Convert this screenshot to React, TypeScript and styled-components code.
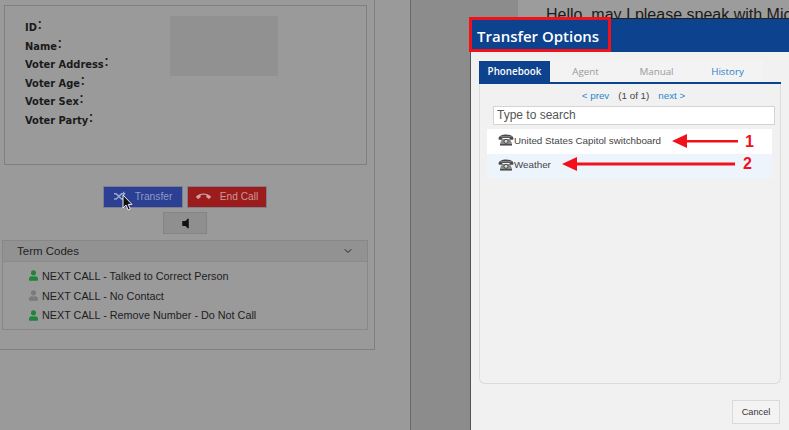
import React from "react";
import styled, { createGlobalStyle } from "styled-components";
import { FaUser, FaVolumeOff } from "react-icons/fa";
import { ImShuffle } from "react-icons/im";
import { MdCallEnd } from "react-icons/md";
import { ChevronDown } from "lucide-react";

const GlobalStyle = createGlobalStyle`
    html, body {
        margin: 0;
        padding: 0;
        width: 789px;
        height: 430px;
        overflow: hidden;
        background: #9a9a9a;
        font-family: "Liberation Sans", Arial, sans-serif;
    }
`;

const Page = styled.div`
    position: relative;
    width: 789px;
    height: 430px;
    overflow: hidden;
    display: flex;
    align-items: flex-start;
`;

const LeftPanel = styled.section`
    width: 375px;
    height: 350px;
    box-sizing: border-box;
    flex-shrink: 0;
    padding: 5px 6px 0 2px;
    border-right: 1px solid #7f7f7f;
    border-bottom: 1px solid #7f7f7f;
    display: flex;
    flex-direction: column;
`;

const InfoBox = styled.div`
    height: 160px;
    margin: 0 0 0 2px;
    width: 363px;
    box-sizing: border-box;
    border: 1px solid #7f7f7f;
    padding: 10px 88px 0 20px;
    display: flex;
    justify-content: space-between;
    align-items: flex-start;
`;

const Fields = styled.div`
    display: flex;
    flex-direction: column;
    padding-top: 3px;
    font-family: "DejaVu Sans", Verdana, sans-serif;
    font-size: 9.9px;
    font-weight: 700;
    color: #1a1a1a;
    line-height: 18.6px;
`;

const Colon = styled.span`
    font-family: "Noto Sans CJK SC", sans-serif;
    font-size: 11px;
    line-height: 0;
    position: relative;
    top: -2px;
`;

const Photo = styled.div`
    width: 108px;
    height: 60px;
    background: #919191;
`;

const Actions = styled.div`
    margin-top: 21px;
    display: flex;
    justify-content: center;
    gap: 4px;
`;

const CallButton = styled.div<{ $bg: string; $fg: string }>`
    width: 80px;
    height: 22px;
    box-sizing: border-box;
    background: ${props => props.$bg};
    border: 1px solid #7b7f90;
    color: ${props => props.$fg};
    font-size: 10.2px;
    display: flex;
    align-items: center;
    justify-content: center;
    gap: 9px;
    padding-bottom: 2px;
`;

const SpeakerRow = styled.div`
    margin-top: 4px;
    display: flex;
    justify-content: center;
`;

const SpeakerButton = styled.div`
    width: 44px;
    height: 22px;
    box-sizing: border-box;
    background: #8f8f8f;
    border: 1px solid #848484;
    color: #111;
    display: flex;
    align-items: center;
    justify-content: center;
`;

const TermCodes = styled.div`
    margin-top: 6px;
    width: 366px;
    height: 90px;
    box-sizing: border-box;
    border: 1px solid #878787;
`;

const TermHeader = styled.div`
    height: 21px;
    box-sizing: border-box;
    background: #929292;
    border-bottom: 1px solid #8a8a8a;
    padding: 0 13px 0 14px;
    display: flex;
    align-items: center;
    justify-content: space-between;
    font-size: 11.5px;
    color: #222;
`;

const TermList = styled.div`
    padding: 4px 0 0 26px;
    display: flex;
    flex-direction: column;
`;

const TermRow = styled.div`
    height: 19.7px;
    display: flex;
    align-items: center;
    gap: 4px;
    font-size: 10.8px;
    color: #1d1d1d;
`;

const TermIcon = styled(FaUser)<{ $on: boolean }>`
    width: 9px;
    height: 11px;
    color: ${props => (props.$on ? "#1f8338" : "#7a7a7a")};
`;

const Gutter = styled.div`
    width: 35px;
    height: 430px;
    flex-shrink: 0;
    border-right: 1px solid #6a6a6a;
`;

const Script = styled.div`
    flex: 1;
    height: 430px;
    background: #8c8c8c;
    display: flex;
`;

const ScriptMargin = styled.div`
    width: 107px;
    flex-shrink: 0;
`;

const ScriptBody = styled.div`
    flex: 1;
    background: #9c9c9c;
    overflow: hidden;
    white-space: nowrap;
    font-size: 16px;
    color: #1a1a1a;
    padding: 6px 0 0 28px;
`;

const Modal = styled.div`
    position: absolute;
    left: 470px;
    top: 18px;
    width: 319px;
    height: 412px;
    box-sizing: border-box;
    background: #f1f1f1;
    border-left: 1px solid #555;
    border-top: 1px solid #222;
    display: flex;
    flex-direction: column;
`;

const ModalHeader = styled.div`
    height: 33px;
    flex-shrink: 0;
    background: #0d428e;
    color: #fff;
    font-family: "Open Sans", sans-serif;
    font-size: 15px;
    font-weight: 600;
    line-height: 35px;
    padding-left: 6px;
`;

const Tabs = styled.div`
    margin: 9px 0 0 8px;
    width: 302px;
    height: 23px;
    box-sizing: border-box;
    border-bottom: 2px solid #0d428e;
    display: flex;
`;

const Tab = styled.div<{ $active?: boolean; $link?: boolean }>`
    width: 71px;
    height: 21px;
    flex-shrink: 0;
    text-align: center;
    font-size: 9.8px;
    line-height: 22px;
    font-family: "Open Sans", sans-serif;
    font-weight: ${props => (props.$active ? 600 : 400)};
    background: ${props => (props.$active ? "#0d428e" : "#f3f3f3")};
    color: ${props => (props.$active ? "#fff" : props.$link ? "#2a80c8" : "#9a9a9a")};
`;

const TabPanel = styled.div`
    margin-left: 8px;
    width: 302px;
    height: 300px;
    box-sizing: border-box;
    border: 1px solid #dcdcdc;
    border-top: 0;
    border-radius: 0 0 6px 6px;
    padding: 5px 6px 0 7px;
    display: flex;
    flex-direction: column;
`;

const Pager = styled.div`
    display: flex;
    justify-content: center;
    gap: 9px;
    padding-left: 6px;
    font-size: 9.8px;
    line-height: 13px;
    color: #444;
`;

const PagerLink = styled.span`
    color: #2a86cc;
`;

const Search = styled.div`
    margin: 4px 0 0 6px;
    width: 282px;
    height: 19px;
    box-sizing: border-box;
    background: #fff;
    border: 1px solid #d4d4d4;
    padding-left: 3px;
    font-size: 12px;
    line-height: 17px;
    color: #555;
`;

const PhoneRow = styled.div<{ $tint: string }>`
    width: 285px;
    height: 24.5px;
    flex-shrink: 0;
    box-sizing: border-box;
    background: ${props => props.$tint};
    padding: 0 0 2px 11px;
    display: flex;
    align-items: center;
    font-size: 9.8px;
    color: #444;
`;

const Rows = styled.div`
    margin-top: 4px;
    display: flex;
    flex-direction: column;
`;

const Footer = styled.div`
    margin-top: 16px;
    padding-right: 9px;
    display: flex;
    justify-content: flex-end;
`;

const CancelButton = styled.div`
    width: 48px;
    height: 24px;
    box-sizing: border-box;
    background: #f3f3f3;
    border: 1px solid #dadada;
    font-size: 9.2px;
    line-height: 23px;
    text-align: center;
    color: #333;
`;

const TitleFrame = styled.div`
    position: absolute;
    left: 469px;
    top: 17px;
    width: 142px;
    height: 35px;
    box-sizing: border-box;
    border: 3px solid #f2101a;
`;

const Annotation = styled.svg`
    position: absolute;
    left: 0;
    top: 0;
    pointer-events: none;
`;

const AnnotationNumber = styled.span<{ $top: number; $left: number }>`
    position: absolute;
    top: ${props => props.$top}px;
    left: ${props => props.$left}px;
    font-size: 16px;
    font-weight: 700;
    color: #f2101a;
    line-height: 16px;
`;

const Cursor = styled.svg`
    position: absolute;
    left: 121px;
    top: 194px;
`;

const PhoneIcon = () => (
    <svg width="16" height="12" viewBox="0 0 16 12" style={{ flexShrink: 0 }}>
        <path d="M0.5 4.5C1 1.5 4.5 0.5 8 0.5s7 1 7.5 4l-.4 1.3h-3L11.4 4H4.6l-.7 1.8h-3z" fill="#4a4a4a" />
        <path d="M4 5h8l2 4.5v2H2v-2z" fill="#8a8a8a" />
        <circle cx="8" cy="7.3" r="2" fill="#d8d8d8" stroke="#333" strokeWidth="0.8" />
        <path d="M2 10.8h12" stroke="#333" strokeWidth="1" />
        <path d="M2.5 2.7h11" stroke="#bbb" strokeWidth="0.6" />
    </svg>
);

const fields = ["ID", "Name", "Voter Address", "Voter Age", "Voter Sex", "Voter Party"];

const App: React.FC = () => {
    return (
        <Page>
            <GlobalStyle />
            <LeftPanel>
                <InfoBox>
                    <Fields>
                        {fields.map(field => (
                            <span key={field}>
                                {field}
                                <Colon>：</Colon>
                            </span>
                        ))}
                    </Fields>
                    <Photo />
                </InfoBox>
                <Actions>
                    <CallButton $bg="#2b3f93" $fg="#8d9ac4">
                        <ImShuffle size={12} color="#9aa5c9" />
                        Transfer
                    </CallButton>
                    <CallButton $bg="#9c1b1b" $fg="#c99a9a">
                        <MdCallEnd size={15} color="#c9a5a5" />
                        End Call
                    </CallButton>
                </Actions>
                <SpeakerRow>
                    <SpeakerButton>
                        <FaVolumeOff size={13} />
                    </SpeakerButton>
                </SpeakerRow>
                <TermCodes>
                    <TermHeader>
                        Term Codes
                        <ChevronDown size={12} color="#222" strokeWidth={2} />
                    </TermHeader>
                    <TermList>
                        <TermRow><TermIcon $on />NEXT CALL - Talked to Correct Person</TermRow>
                        <TermRow><TermIcon $on={false} />NEXT CALL - No Contact</TermRow>
                        <TermRow><TermIcon $on />NEXT CALL - Remove Number - Do Not Call</TermRow>
                    </TermList>
                </TermCodes>
            </LeftPanel>
            <Gutter />
            <Script>
                <ScriptMargin />
                <ScriptBody>Hello, may I please speak with Mic</ScriptBody>
            </Script>
            <Modal>
                <ModalHeader>Transfer Options</ModalHeader>
                <Tabs>
                    <Tab $active>Phonebook</Tab>
                    <Tab>Agent</Tab>
                    <Tab>Manual</Tab>
                    <Tab $link>History</Tab>
                </Tabs>
                <TabPanel>
                    <Pager>
                        <PagerLink>&lt; prev</PagerLink>
                        <span>(1 of 1)</span>
                        <PagerLink>next &gt;</PagerLink>
                    </Pager>
                    <Search>Type to search</Search>
                    <Rows>
                        <PhoneRow $tint="#ffffff"><PhoneIcon />United States Capitol switchboard</PhoneRow>
                        <PhoneRow $tint="#edf4fc"><PhoneIcon />Weather</PhoneRow>
                    </Rows>
                </TabPanel>
                <Footer>
                    <CancelButton>Cancel</CancelButton>
                </Footer>
            </Modal>
            <TitleFrame />
            <Annotation width="789" height="430" viewBox="0 0 789 430">
                <path d="M738 140H687V134L672 141L687 148V142.5H738z" fill="#f2101a" />
                <path d="M735 162.5H577V157L562 164L577 171V165.5H735z" fill="#f2101a" />
            </Annotation>
            <AnnotationNumber $top={134} $left={745}>1</AnnotationNumber>
            <AnnotationNumber $top={156} $left={743}>2</AnnotationNumber>
            <Cursor width="14" height="18" viewBox="0 0 14 18">
                <path d="M2 1v13l3-3 2.2 5 2.2-1-2.2-4.6H11z" fill="#111" stroke="#eee" strokeWidth="1" />
            </Cursor>
        </Page>
    );
};

export default App;
